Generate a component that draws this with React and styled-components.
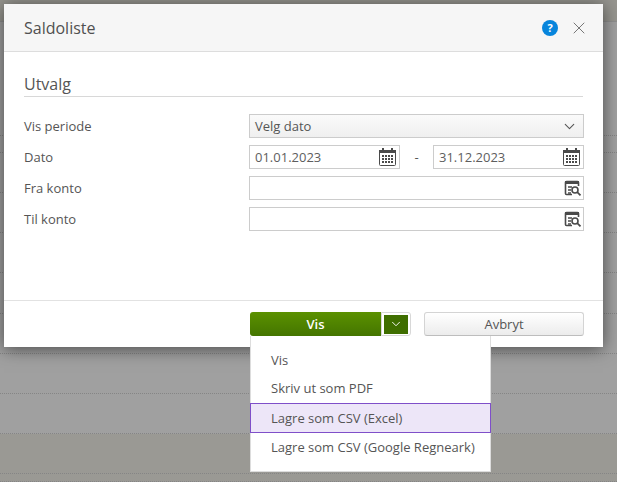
import React from 'react'
import styled, { createGlobalStyle } from 'styled-components'
import { ChevronDown, X } from 'lucide-react'

const GlobalStyle = createGlobalStyle`
  html, body {
    margin: 0;
    padding: 0;
    height: 100%;
    overflow: hidden;
    background: #9f9f9f;
    font-family: "Open Sans", "Liberation Sans", sans-serif;
    color: #555;
  }
`;

const Page = styled.div`
  position: relative;
  width: 617px;
  height: 482px;
  overflow: hidden;
  background: #a0a0a0;
`;

const TopBand = styled.div`
  height: 22px;
  background: #96958f;
  border-bottom: 1px solid #8e8e8e;
  box-sizing: border-box;
`;

const BackRow = styled.div`
  height: ${(p) => p.$height}px;
  box-sizing: border-box;
  background: ${(p) => p.$tint || 'transparent'};
  border-bottom: 1px dotted #858585;
`;

const Modal = styled.div`
  position: absolute;
  left: 4px;
  top: 4px;
  width: 599px;
  height: 343px;
  display: flex;
  flex-direction: column;
  background: #fff;
  box-shadow: 0 2px 16px rgba(0, 0, 0, 0.55);
`;

const Header = styled.header`
  height: 48px;
  flex: none;
  box-sizing: border-box;
  display: flex;
  align-items: center;
  padding: 0 14px 0 20px;
  background: #f6f6f6;
  border-bottom: 1px solid #ddd;
`;

const Title = styled.h1`
  margin: 0;
  flex: 1;
  font-size: 16px;
  font-weight: 400;
  color: #505050;
`;

const HelpBadge = styled.span`
  width: 16px;
  height: 16px;
  margin-right: 11px;
  margin-left: -1px;
  border-radius: 50%;
  background: #0785dc;
  color: #fff;
  font-size: 11px;
  font-weight: 700;
  line-height: 16px;
  text-align: center;
`;

const CloseButton = styled.span`
  display: flex;
  color: #777;
`;

const Body = styled.div`
  flex: 1;
  padding: 20px 20px 0;
`;

const SectionTitle = styled.h2`
  margin: 0 0 17px;
  height: 25px;
  box-sizing: border-box;
  font-size: 16px;
  line-height: 24px;
  font-weight: 400;
  color: #555;
  border-bottom: 1px solid #d8d8d8;
`;

const FormGrid = styled.div`
  display: grid;
  grid-template-columns: 225px 335px;
  grid-auto-rows: 24px;
  row-gap: 7px;
  align-items: center;
  font-size: 13px;
`;

const Label = styled.label`
  color: #555;
`;

const Select = styled.div`
  height: 24px;
  box-sizing: border-box;
  display: flex;
  align-items: center;
  justify-content: space-between;
  padding: 0 5px 0 5px;
  border: 1px solid #ccc;
  background: linear-gradient(#fafafa, #efefef);
`;

const DateRow = styled.div`
  display: grid;
  grid-template-columns: 151px 33px 151px;
  align-items: center;
  text-align: center;
`;

const Field = styled.div`
  height: 24px;
  box-sizing: border-box;
  display: flex;
  align-items: center;
  justify-content: space-between;
  padding: 0 1px 0 5px;
  border: 1px solid #ccc;
  background: #fff;
  color: #5e5e5e;
  text-align: left;
`;

const Footer = styled.footer`
  height: 47px;
  flex: none;
  box-sizing: border-box;
  display: flex;
  align-items: flex-start;
  padding: 11px 19px 0 246px;
  border-top: 1px solid #e2e2e2;
`;

const SplitButton = styled.div`
  position: relative;
  display: flex;
  margin-right: 13px;
`;

const PrimaryButton = styled.button`
  width: 131px;
  height: 24px;
  padding: 0;
  border: none;
  border-radius: 3px 0 0 3px;
  background: linear-gradient(#5b9100, #447500);
  color: #fff;
  font: 600 13px "Open Sans", sans-serif;
`;

const ToggleButton = styled.button`
  width: 30px;
  height: 24px;
  box-sizing: border-box;
  padding: 0;
  display: flex;
  align-items: center;
  justify-content: center;
  border: 1px solid #d8d8d8;
  border-radius: 0 3px 3px 0;
  background: #fff;
  color: #fff;
`;

const ToggleFill = styled.span`
  width: 24px;
  height: 19px;
  display: flex;
  align-items: center;
  justify-content: center;
  background: #3f6e00;
`;

const SecondaryButton = styled.button`
  width: 160px;
  height: 24px;
  padding: 0;
  box-sizing: border-box;
  border: 1px solid #d4d4d4;
  border-bottom-color: #bdbdbd;
  border-radius: 3px;
  background: linear-gradient(#fff, #ececec);
  color: #555;
  font: 400 13px "Open Sans", sans-serif;
`;

const Menu = styled.ul`
  position: absolute;
  left: 0;
  top: 24px;
  width: 241px;
  height: 136px;
  margin: 0;
  padding: 10px 0 0;
  box-sizing: border-box;
  list-style: none;
  background: #fff;
  border: 1px solid #ddd;
  border-top: none;
  font-size: 13px;
`;

const MenuItem = styled.li`
  height: 28px;
  margin-top: ${(p) => (p.$active ? '1px' : 0)};
  box-sizing: border-box;
  display: flex;
  align-items: center;
  padding-left: 20px;
  color: #555;
  ${(p) => p.$active && `
    height: 30px;
    margin-left: -1px;
    width: 241px;
    background: #ede6f8;
    border: 1px solid #7f4fc9;
  `}
`;

const CalendarIcon = () => (
  <svg width="20" height="20" viewBox="0 0 20 20" fill="none">
    <rect x="1.5" y="3.5" width="16" height="15" rx="1" stroke="#4a4a4a" />
    <rect x="1" y="3" width="17" height="3" fill="#4a4a4a" />
    <rect x="4" y="1" width="2" height="4" fill="#4a4a4a" />
    <rect x="13" y="1" width="2" height="4" fill="#4a4a4a" />
    {[8, 11, 14].map((y) =>
      [4, 7, 10, 13].map((x) => (
        <rect key={`${x}-${y}`} x={x} y={y} width="2" height="2" fill="#4a4a4a" />
      ))
    )}
  </svg>
);

const LookupIcon = () => (
  <svg width="18" height="16" viewBox="0 0 18 16" fill="none">
    <path d="M8 14.5H2.5a1 1 0 0 1-1-1V2.5a1 1 0 0 1 1-1h11a1 1 0 0 1 1 1V6" stroke="#4a4a4a" strokeWidth="1.6" />
    <rect x="1" y="1" width="14" height="3" fill="#4a4a4a" />
    <path d="M4 7h4M4 10h3M4 13h3" stroke="#4a4a4a" strokeWidth="1.4" />
    <circle cx="11" cy="10" r="3" stroke="#4a4a4a" strokeWidth="1.6" />
    <path d="M13.2 12.2L16.5 15.3" stroke="#4a4a4a" strokeWidth="1.8" />
  </svg>
);

export default function App() {
  return (
    <Page>
      <GlobalStyle />
      <TopBand />
      <BackRow $height={114} />
      <BackRow $height={17} />
      <BackRow $height={40} />
      <BackRow $height={40} />
      <BackRow $height={40} />
      <BackRow $height={41} />
      <BackRow $height={40} />
      <BackRow $height={40} />
      <BackRow $height={40} />
      <BackRow $height={40} $tint="#9a9994" />
      <BackRow $height={8} $tint="#9a9994" />

      <Modal>
        <Header>
          <Title>Saldoliste</Title>
          <HelpBadge>?</HelpBadge>
          <CloseButton><X size={20} strokeWidth={1.2} /></CloseButton>
        </Header>
        <Body>
          <SectionTitle>Utvalg</SectionTitle>
          <FormGrid>
            <Label>Vis periode</Label>
            <Select>
              Velg dato
              <ChevronDown size={17} strokeWidth={1.5} color="#555" />
            </Select>
            <Label>Dato</Label>
            <DateRow>
              <Field>01.01.2023<CalendarIcon /></Field>
              -
              <Field>31.12.2023<CalendarIcon /></Field>
            </DateRow>
            <Label>Fra konto</Label>
            <Field><span /><LookupIcon /></Field>
            <Label>Til konto</Label>
            <Field><span /><LookupIcon /></Field>
          </FormGrid>
        </Body>
        <Footer>
          <SplitButton>
            <PrimaryButton>Vis</PrimaryButton>
            <ToggleButton>
              <ToggleFill><ChevronDown size={14} strokeWidth={1.6} /></ToggleFill>
            </ToggleButton>
            <Menu>
              <MenuItem>Vis</MenuItem>
              <MenuItem>Skriv ut som PDF</MenuItem>
              <MenuItem $active>Lagre som CSV (Excel)</MenuItem>
              <MenuItem>Lagre som CSV (Google Regneark)</MenuItem>
            </Menu>
          </SplitButton>
          <SecondaryButton>Avbryt</SecondaryButton>
        </Footer>
      </Modal>
    </Page>
  )
}
